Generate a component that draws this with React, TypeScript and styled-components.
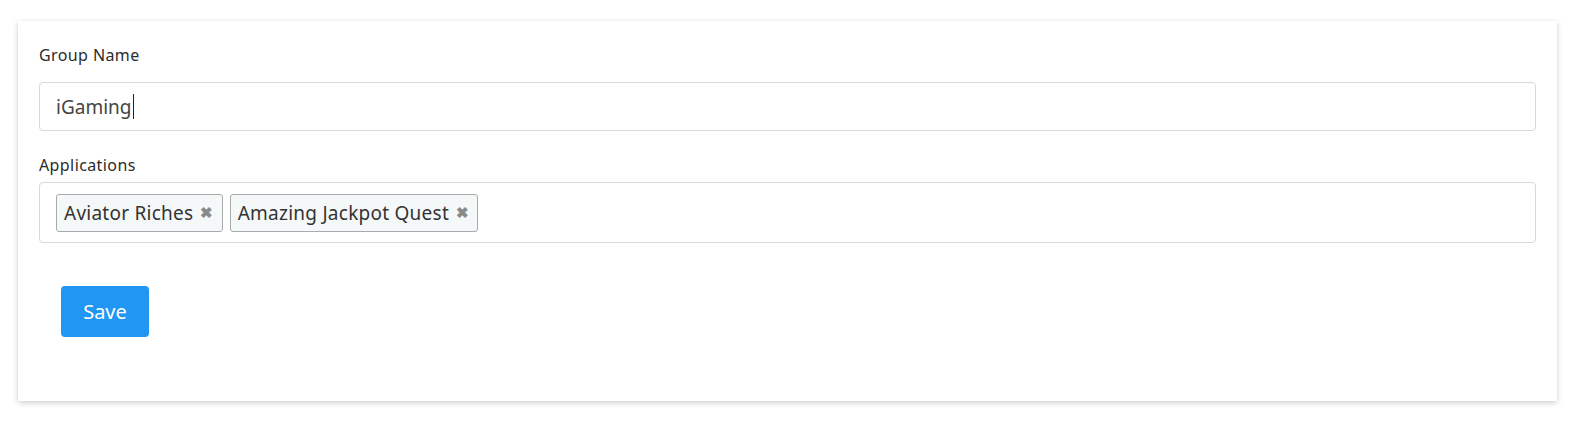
import React from "react";
import styled, { createGlobalStyle } from "styled-components";

const GlobalStyle = createGlobalStyle`
    body {
        margin: 0;
        background: #FFFFFF;
        font-family: "Noto Sans", "Open Sans", sans-serif;
    }
`;

const Page = styled.div`
    padding: 21px 19px 21px 18px;
`;

const Card = styled.div`
    background: #FFFFFF;
    box-shadow: 0 2px 6px rgba(0, 0, 0, 0.18), 0 0 2px rgba(0, 0, 0, 0.06);
    padding: 23px 21px 0 21px;
    height: 380px;
    box-sizing: border-box;
`;

interface FieldProps {
    gap: number;
}

const Field = styled.div<FieldProps>`
    margin-bottom: 23px;

    & > label {
        margin-bottom: ${(props) => props.gap}px;
    }
`;

const Label = styled.label`
    display: block;
    font-size: 16px;
    letter-spacing: 0.4px;
    color: #2B2B2B;
    line-height: 22px;
`;

const TextBox = styled.div`
    height: 49px;
    box-sizing: border-box;
    border: 1px solid #D9D9D9;
    border-radius: 4px;
    padding: 0 16px;
    display: flex;
    align-items: center;
    font-size: 19px;
    color: #444444;
`;

const Caret = styled.span`
    display: inline-block;
    width: 1.5px;
    height: 25px;
    background: #222222;
    margin-left: 1px;
`;

const MultiBox = styled.div`
    height: 61px;
    box-sizing: border-box;
    border: 1px solid #D9D9D9;
    border-radius: 4px;
    padding: 0 16px;
    display: flex;
    align-items: center;
    gap: 7px;
`;

const Tag = styled.div`
    height: 38px;
    box-sizing: border-box;
    display: flex;
    align-items: center;
    gap: 7px;
    padding: 0 8px 0 7px;
    background: #F5F8F8;
    border: 1px solid #A8ABAB;
    border-radius: 3px;
    font-size: 19px;
    letter-spacing: 0.25px;
    color: #333333;
`;

const Remove = styled.span`
    font-size: 15px;
    font-weight: bold;
    color: #8A8A8A;
    line-height: 1;
`;

const Actions = styled.div`
    padding: 20px 22px 0;
`;

const SaveButton = styled.button`
    width: 88px;
    height: 51px;
    background: #2196F3;
    border: none;
    border-radius: 4px;
    color: #FFFFFF;
    font-family: "Noto Sans", "Open Sans", sans-serif;
    font-size: 20px;
    cursor: pointer;
`;

const apps = ["Aviator Riches", "Amazing Jackpot Quest"];

export default function App() {
    return (
        <Page>
            <GlobalStyle />
            <Card>
                <Field gap={16}>
                    <Label>Group Name</Label>
                    <TextBox>
                        iGaming<Caret />
                    </TextBox>
                </Field>
                <Field gap={6}>
                    <Label>Applications</Label>
                    <MultiBox>
                        {apps.map((app) => (
                            <Tag key={app}>
                                {app}
                                <Remove>✖</Remove>
                            </Tag>
                        ))}
                    </MultiBox>
                </Field>
                <Actions>
                    <SaveButton>Save</SaveButton>
                </Actions>
            </Card>
        </Page>
    );
}
